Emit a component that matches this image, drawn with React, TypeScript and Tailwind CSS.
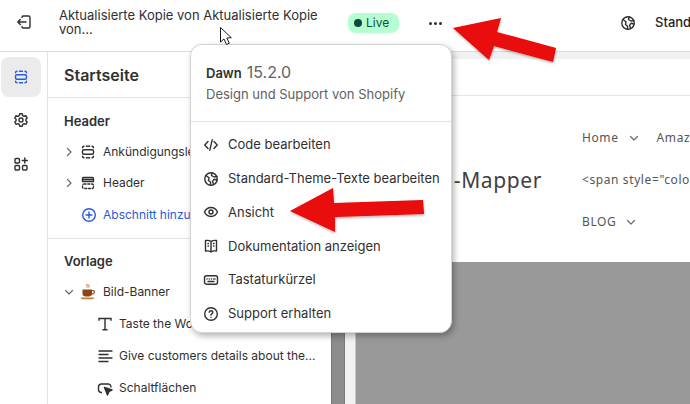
import React from 'react';

const Icon = ({ children, className = 'text-[#303030]' }: { children: React.ReactNode; className?: string }) => (
  <svg width="16" height="16" viewBox="0 0 16 16" fill="none" stroke="currentColor" strokeWidth="1.4" strokeLinecap="round" strokeLinejoin="round" className={`shrink-0 ${className}`}>
    {children}
  </svg>
);

const SectionIcon = ({ className }: { className?: string }) => (
  <Icon className={className}>
    <rect x="2.500" y="5.800" width="11" height="4.400" rx="1.500" />
    <path d="M2.500 3.800A1.500 1.500 0 0 1 4 2.300M6.500 2.300h3M12 2.300a1.500 1.500 0 0 1 1.500 1.500M2.500 12.200A1.500 1.500 0 0 0 4 13.700M6.500 13.700h3M12 13.700a1.500 1.500 0 0 0 1.500-1.500" />
  </Icon>
);

const HeaderIcon = () => (
  <Icon>
    <path d="M3.500 2.500h9a1 1 0 0 1 1 1v3h-11v-3a1 1 0 0 1 1-1zM2.500 4.500h11" />
    <rect x="2.500" y="9" width="11" height="4.500" rx="1.500" strokeDasharray="2 1.800" />
  </Icon>
);

const GlobeIcon = () => (
  <Icon>
    <circle cx="8" cy="8" r="6.200" />
    <path d="M3 4.500 6 6.800 5.500 9.500l2 1.500v3M9 2l-.5 2.500L11 6l3-.5M14 9l-3-.7-1.500 2 1 3" />
  </Icon>
);

const Chevron = ({ open }: { open?: boolean }) => (
  <svg width="12" height="12" viewBox="0 0 12 12" fill="none" stroke="#6b6b6b" strokeWidth="1.200" strokeLinecap="round" strokeLinejoin="round" className="shrink-0">
    {open ? <path d="M2.500 4.500 6 8l3.500-3.500" /> : <path d="M4.500 2.500 8 6 4.500 9.500" />}
  </svg>
);

const Coffee = () => (
  <svg width="16" height="18" viewBox="0 0 16 18" className="shrink-0">
    <path d="M7 1c-1.500 1.500 1.500 2-.2 3.500M9 1.500C8 3 10 3 8.800 4.500" stroke="#a9683c" strokeWidth="1" fill="none" />
    <path d="M2.500 6.500h9.500v4.200c0 1.700-1.500 2.800-3 2.800H5.500c-1.500 0-3-1.100-3-2.800z" fill="#8a4513" />
    <path d="M12 7.500h1c2 0 2 3.500-1 3.700" stroke="#8a4513" strokeWidth="1.200" fill="none" />
    <path d="M.5 14.500h14c-.6 1.400-2 1.800-3 1.800h-8c-1 0-2.400-.4-3-1.800z" fill="#c07a3a" />
  </svg>
);

const Row = ({ icon, label, open }: { icon: React.ReactNode; label: string; open?: boolean }) => (
  <div className="flex h-[31.500px] items-center pl-[15px] text-[12px] text-[#303030] whitespace-nowrap">
    <Chevron open={open} />
    <span className="ml-[4px] flex w-[18px] justify-center">{icon}</span>
    <span className="ml-[6px]">{label}</span>
  </div>
);

const SubRow = ({ icon, label }: { icon: React.ReactNode; label: string }) => (
  <div className="flex h-[32px] items-center pl-[49px] text-[12px] text-[#303030] whitespace-nowrap">
    <span className="flex w-[16px] justify-center">{icon}</span>
    <span className="ml-[6px]">{label}</span>
  </div>
);

const menuItems: { label: string; icon: React.ReactNode }[] = [
  {
    label: 'Code bearbeiten',
    icon: (
      <Icon>
        <path d="M5 4.500 1.800 8 5 11.500M11 4.500 14.200 8 11 11.500M9.200 2.800 6.800 13.200" />
      </Icon>
    ),
  },
  { label: 'Standard-Theme-Texte bearbeiten', icon: <GlobeIcon /> },
  {
    label: 'Ansicht',
    icon: (
      <Icon>
        <path d="M1.500 8C3 4.800 5.300 3.500 8 3.500s5 1.300 6.500 4.500c-1.500 3.200-3.800 4.500-6.500 4.500S3 11.200 1.500 8z" />
        <circle cx="8" cy="8" r="2" />
      </Icon>
    ),
  },
  {
    label: 'Dokumentation anzeigen',
    icon: (
      <Icon>
        <path d="M8 3.500C6.500 2.500 4.500 2.200 2.500 2.500v10.500c2-.3 4 0 5.500 1 1.500-1 3.500-1.300 5.500-1V2.500c-2-.3-4 0-5.500 1zM8 3.500V14M5 5.500h.5M5 8h.5M10.500 5.500h.5M10.500 8h.5" />
      </Icon>
    ),
  },
  {
    label: 'Tastaturkürzel',
    icon: (
      <Icon>
        <rect x="1.500" y="3.800" width="13" height="8.400" rx="2" />
        <path d="M4 7h.1M6.200 7h.1M8.400 7h.1M10.600 7h.1M12 7h.1M5 9.500h6" />
      </Icon>
    ),
  },
  {
    label: 'Support erhalten',
    icon: (
      <Icon>
        <circle cx="8" cy="8" r="6.300" />
        <path d="M6.200 6.300C6.300 5.200 7 4.700 8 4.700s1.900.6 1.900 1.600c0 1.300-1.900 1.400-1.900 2.800M8 11.300h.01" />
      </Icon>
    ),
  },
];

export default function App() {
  return (
    <div className="relative flex h-[404px] w-[690px] flex-col overflow-hidden bg-white font-['Inter',sans-serif]">
      {/* top bar */}
      <div className="flex h-[52px] shrink-0 items-center border-b border-[#dcdcdc] text-[13px] text-[#303030]">
        <div className="flex w-[47px] shrink-0 justify-center -mt-[7px]">
          <Icon>
            <path d="M6 3.500V3.200C6 2.500 6.600 2 7.200 2h5.300c.8 0 1.500.7 1.500 1.500v9c0 .8-.7 1.500-1.500 1.500H7.200C6.600 14 6 13.500 6 12.800v-.3M10 8H1.800M4.300 5.500 1.800 8l2.500 2.500" />
          </Icon>
        </div>
        <div className="ml-[12px] w-[274px] shrink-0 leading-[14px] -mt-[7px]">Aktualisierte Kopie von Aktualisierte Kopie von...</div>
        <div className="ml-[15px] flex h-[20px] w-[51px] shrink-0 items-center rounded-lg bg-[#b4fed2] pl-[6px] text-[12px] text-[#0c5132] -mt-[5px]">
          <span className="h-[8px] w-[8px] rounded-full bg-[#0c4a3a]" />
          <span className="ml-[4px]">Live</span>
        </div>
        <div className="ml-[30px] flex shrink-0 gap-[2px] -mt-[5px]">
          <span className="h-[3px] w-[3px] rounded-full bg-[#303030]" />
          <span className="h-[3px] w-[3px] rounded-full bg-[#303030]" />
          <span className="h-[3px] w-[3px] rounded-full bg-[#303030]" />
        </div>
        <div className="ml-[178px] flex shrink-0 -mt-[5px] items-center">
          <GlobeIcon />
          <span className="ml-[19px] font-medium text-[#1f1f1f] whitespace-nowrap">Standard</span>
        </div>
      </div>

      {/* body */}
      <div className="flex min-h-0 flex-1">
        <div className="flex w-[48px] shrink-0 flex-col items-start border-r border-[#e3e3e3] pl-[1px] pt-[5px]">
          <div className="flex h-[40px] w-[40px] items-center justify-center rounded-lg bg-[#ebebeb]">
            <SectionIcon className="text-[#2a5bd7]" />
          </div>
          <div className="mt-[3px] flex h-[40px] w-[40px] items-center justify-center">
            <Icon>
              <circle cx="8" cy="8" r="2" />
              <path d="M6.700 1.800h2.600l.4 1.800 1.500.8 1.700-.7 1.300 2.300-1.300 1.200v1.600l1.300 1.200-1.300 2.300-1.700-.7-1.500.8-.4 1.800H6.700l-.4-1.800-1.500-.8-1.700.7-1.300-2.300 1.300-1.200V7.200L1.800 6l1.300-2.300 1.700.7 1.500-.8z" />
            </Icon>
          </div>
          <div className="mt-[4px] flex h-[40px] w-[40px] items-center justify-center">
            <Icon>
              <rect x="2" y="2.500" width="4.500" height="4.500" rx="1" />
              <rect x="2" y="9.500" width="4.500" height="4.500" rx="1" />
              <rect x="9.500" y="9.500" width="4.500" height="4.500" rx="1" />
              <path d="M11.800 2v5M9.300 4.500h5" />
            </Icon>
          </div>
        </div>

        <div className="w-[283px] shrink-0 overflow-hidden">
          <div className="flex h-[46px] items-center border-b border-[#e3e3e3] pl-[16px] pt-[1px] text-[16px] font-semibold text-[#303030]">Startseite</div>
          <div className="flex h-[38px] items-end pb-[5px] pl-[16px] text-[13px] font-semibold text-[#303030]">Header</div>
          <Row icon={<SectionIcon />} label="Ankündigungsleiste" />
          <Row icon={<HeaderIcon />} label="Header" />
          <div className="flex h-[31.500px] items-center pl-[33px] text-[12px] text-[#2a5bd7] whitespace-nowrap">
            <Icon className="text-[#2a5bd7]">
              <circle cx="8" cy="8" r="6.300" />
              <path d="M8 5v6M5 8h6" />
            </Icon>
            <span className="ml-[6px]">Abschnitt hinzufügen</span>
          </div>
          <div className="mt-[7px] flex h-[39px] items-end border-t border-[#e3e3e3] pb-[5px] pl-[16px] text-[13px] font-semibold text-[#303030]">Vorlage</div>
          <Row icon={<Coffee />} label="Bild-Banner" open />
          <SubRow
            label="Taste the World"
            icon={
              <svg width="14" height="14" viewBox="0 0 14 14" fill="none" stroke="#303030" strokeWidth="1.400">
                <path d="M1 3.800V1.500h12v2.300M7 1.500v11M4.500 12.700h5" />
              </svg>
            }
          />
          <SubRow
            label="Give customers details about the..."
            icon={
              <svg width="15" height="14" viewBox="0 0 15 14" fill="none" stroke="#303030" strokeWidth="1.300" strokeLinecap="round">
                <path d="M1 2h13M1 5.500h9M1 9h13M1 12.500h9" />
              </svg>
            }
          />
          <SubRow
            label="Schaltflächen"
            icon={
              <svg width="16" height="16" viewBox="0 0 16 16" fill="none" stroke="#303030" strokeWidth="1.400" strokeLinejoin="round">
                <path d="M5 12.500H4A3 3 0 0 1 1.500 9.500V7A3 3 0 0 1 4 4h7.500A3 3 0 0 1 14 6.500v1" />
                <path d="M7.500 7.500 15 10l-3 1.400L10.500 15z" fill="#303030" />
              </svg>
            }
          />
        </div>

        <div className="w-[14px] shrink-0 border-x border-[#7a7a7a] bg-[#8c8c8c]" />
        <div className="w-[10px] shrink-0 bg-[#f1f1f1]" />

        {/* preview */}
        <div className="flex min-w-0 flex-1 flex-col overflow-hidden">
          <div className="h-[7px] shrink-0 bg-[#f1f1f1]" />
          <div className="flex min-h-0 flex-1 flex-col border-l border-[#c8c8c8] font-['Noto_Sans',sans-serif] text-[#555555]">
            <div className="h-[37px] shrink-0 border-b border-[#e5e5e5]" />
            <div className="flex h-[166px] shrink-0 whitespace-nowrap">
              <div className="flex w-[186px] shrink-0 items-center justify-end pt-[4px] text-[21px] tracking-[0.6px] text-[#3f3f3f]">Bild-Mapper</div>
              <div className="ml-[40px] flex flex-col pt-[21px] text-[12px] tracking-[0.6px]">
                <div className="flex h-[42px] items-center">
                  <span>Home</span>
                  <span className="ml-[9px]"><Chevron open /></span>
                  <span className="ml-[17px]">Amazon</span>
                </div>
                <div className="flex h-[42px] items-center">{'<span style="color'}</div>
                <div className="flex h-[41px] items-center">
                  <span>BLOG</span>
                  <span className="ml-[9px]"><Chevron open /></span>
                </div>
              </div>
            </div>
            <div className="flex-1 bg-[#999999]" />
          </div>
        </div>
      </div>

      {/* theme menu */}
      <div className="absolute left-[190px] top-[44px] h-[289px] w-[262px] rounded-xl border border-[#d4d4d4] bg-white shadow-[2px_3px_6px_rgba(0,0,0,0.3)]">
        <div className="h-[77px] border-b border-[#e3e3e3] pl-[15px] pt-[15px]">
          <div className="flex items-baseline gap-[5px] text-[#303030]">
            <span className="text-[13px] font-semibold">Dawn</span>
            <span className="text-[16px] text-[#616161]">15.2.0</span>
          </div>
          <div className="mt-[1px] text-[13px] text-[#616161]">Design und Support von Shopify</div>
        </div>
        <div className="pt-[6px]">
          {menuItems.map((item) => (
            <div key={item.label} className="flex h-[33.800px] items-center pl-[12px] text-[13px] text-[#303030] whitespace-nowrap">
              {item.icon}
              <span className="ml-[9px]">{item.label}</span>
            </div>
          ))}
        </div>
      </div>

      {/* annotation arrows and the mouse cursor, drawn over the screenshot */}
      <svg width="690" height="404" className="pointer-events-none absolute left-0 top-0">
        <defs>
          <filter id="arrow-shadow" x="-20%" y="-20%" width="140%" height="140%">
            <feDropShadow dx="0.500" dy="1.500" stdDeviation="1.200" floodColor="#000" floodOpacity="0.3" />
          </filter>
        </defs>
        <polygon filter="url(#arrow-shadow)" fill="#e90707" points="453,28 501,18 497,32 556,48 553,62 494,46 489,60" />
        <polygon filter="url(#arrow-shadow)" fill="#e90707" points="290,211 333,188 334,203 423,200 424,214 335,217 335,232" />
        <path d="M220.500 27.500v14.500l3.500-3 2.500 5.500 2.800-1.300-2.500-5.200 4.500-.3z" fill="#fff" stroke="#1a1a1a" strokeWidth="1" strokeLinejoin="round" />
      </svg>
    </div>
  );
}
